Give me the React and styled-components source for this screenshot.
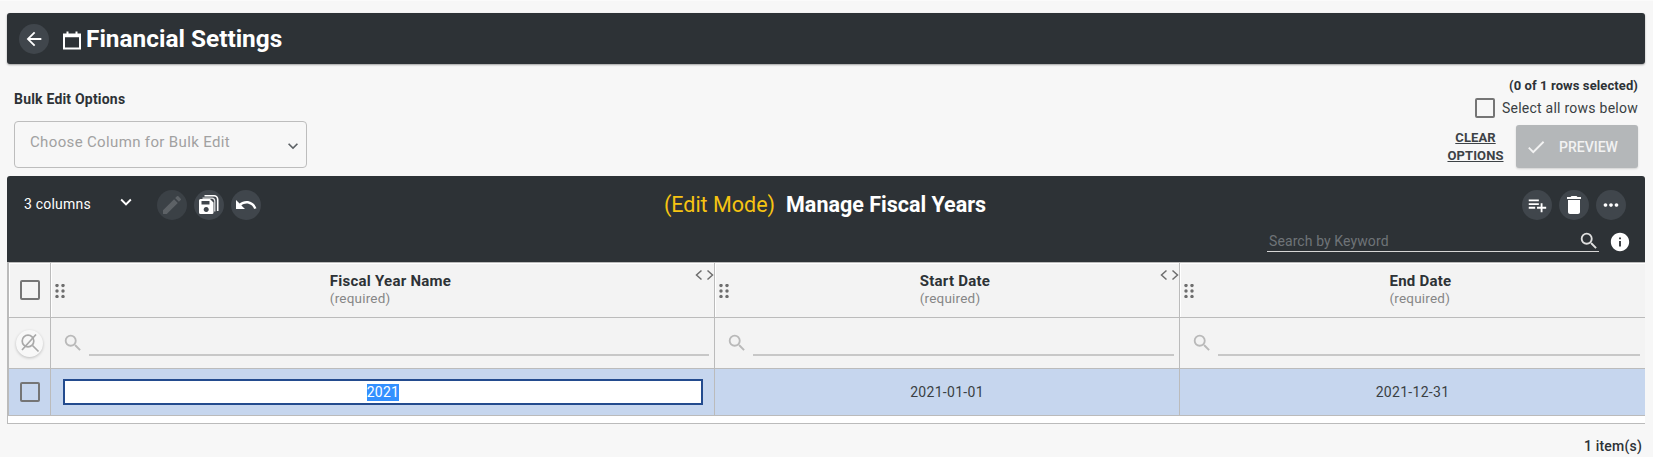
import React from "react";
import styled, { createGlobalStyle } from "styled-components";
import { MdArrowBack, MdEdit, MdUndo, MdPlaylistAdd, MdDelete, MdMoreHoriz, MdSearch, MdInfo, MdCheck, MdExpandMore } from "react-icons/md";

const Global = createGlobalStyle`
  html, body { margin: 0; padding: 0; background: #f7f7f7; }
  body { font-family: Roboto, "Liberation Sans", sans-serif; color: #2d3236; }
  * { box-sizing: border-box; }
`;

const Page = styled.div`
  width: 1653px; height: 457px; overflow: hidden; padding: 13px 8px 0 7px;
  border-top: 1px solid #fbfbfb;
  display: flex; flex-direction: column;
`;
const TitleBar = styled.header`
  height: 51px; margin-top: -1px; background: #2d3236; border-radius: 3px;
  box-shadow: 0 1px 2px rgba(0,0,0,.35);
  display: flex; align-items: center; padding-left: 12px; color: #fff;
`;
const Round = styled.button`
  width: 30px; height: 30px; border-radius: 50%; border: 0; padding: 0;
  background: #40464c; color: ${p => p.$dim ? "#6d7277" : "#fff"};
  opacity: ${p => p.$dim ? 0.75 : 1};
  display: flex; align-items: center; justify-content: center; flex: none;
`;
const Title = styled.h1`
  margin: 0 0 0 4px; font-size: 24.4px; font-weight: 700; line-height: 30px; color: #fff; letter-spacing: 0;
`;
const TitleIcon = styled.svg`margin: 3px 0 0 13px; flex: none;`;

const Options = styled.section`
  height: 112px; padding: 0 7px 8px 7px; display: flex; justify-content: space-between;
`;
const BulkCol = styled.div`display: flex; flex-direction: column; padding-top: 27px;`;
const BulkLabel = styled.label`font-size: 14px; font-weight: 700; line-height: 16px; color: #2d3236; letter-spacing: .2px;`;
const Select = styled.div`
  width: 293px; height: 47px; margin-top: 14px; border: 1px solid #bdbdbd; border-radius: 4px;
  padding: 0 3px 0 15px; display: flex; justify-content: space-between; align-items: center;
  font-size: 15px; color: #a1a1a1; letter-spacing: .35px;
  background: #f7f7f7;
`;
const SelectText = styled.span`margin-top: -5px;`;
const SelectArrow = styled.span`display: flex; margin-top: 3px; color: #5d6266;`;
const RightCol = styled.div`
  display: flex; flex-direction: column; align-items: flex-end; padding: 14px 0 0;
`;
const Count = styled.div`font-size: 13px; font-weight: 700; line-height: 16px; color: #2d3236; letter-spacing: .1px;`;
const SelectAll = styled.div`
  display: flex; align-items: center; gap: 7px; font-size: 14px; line-height: 20px; margin-top: 4px;
  color: #3a3f43; letter-spacing: .25px;
`;
const Box = styled.span`
  display: block; width: 20px; height: 20px; border: 2px solid #757575; border-radius: 2px; flex: none;
`;
const ActionRow = styled.div`display: flex; align-items: center; gap: 12px; margin-top: 7px;`;
const Clear = styled.a`
  width: 57px; text-align: center; font-size: 13px; font-weight: 700; line-height: 18px;
  color: #3d4246; text-decoration: underline; letter-spacing: .1px;
`;
const Preview = styled.button`
  width: 122px; height: 43px; border: 0; border-radius: 3px; background: #b4b7b9; color: #f2f2f2;
  box-shadow: 0 1px 2px rgba(0,0,0,.15);
  font: 500 14px Roboto, sans-serif; display: flex; align-items: center; padding: 0 0 0 9px; gap: 12px;
`;

const Toolbar = styled.div`
  height: 86px; background: #2d3236; border-radius: 3px 3px 0 0; color: #fff;
  display: grid; grid-template-columns: 1fr auto 1fr; grid-template-rows: 56px 30px;
  padding: 0 19px 0 17px;
`;
const ToolLeft = styled.div`display: flex; align-items: center; padding-top: 1px;`;
const Columns = styled.span`font-size: 14px; width: 92px; letter-spacing: .2px; margin-top: -1px;`;
const ColChevron = styled.span`display: flex; width: 42px; margin-top: -5px; margin-left: -1px;`;
const Buttons = styled.div`display: flex; gap: 7px;`;
const ToolTitle = styled.div`
  display: flex; align-items: center; gap: 11px; font-size: 21.5px; line-height: 24px; padding-top: 1px;
`;
const EditMode = styled.span`color: #f6c412;`;
const Manage = styled.span`font-weight: 700; color: #fff;`;
const ToolRight = styled.div`display: flex; justify-content: flex-end; align-items: center; padding-top: 1px;`;
const SearchRow = styled.div`
  grid-column: 1 / -1; display: flex; justify-content: flex-end; align-items: flex-start; gap: 10px; margin-right: -5px;
`;
const SearchBox = styled.div`
  width: 332px; height: 21px; margin-top: -1px; border-bottom: 1px solid #d6d6d6; display: flex; align-items: center; justify-content: space-between;
  font-size: 14px; color: #6f7478; padding-left: 2px; letter-spacing: .1px;
`;
const SearchGlyph = styled.span`display: flex; color: #dfdfdf; margin-right: -1px;`;
const InfoGlyph = styled.span`display: flex; margin-top: -1px; color: #fff;`;

const Grid = styled.div`
  display: grid; grid-template-columns: 42px 664px 465px 1fr; grid-template-rows: 55px 51px 47px;
  border-left: 2px solid #bbb; border-top: 1px solid #bbb; background: #f3f3f3;
`;
const Cell = styled.div`
  position: relative; border-right: 1px solid #bbb; border-bottom: 1px solid #bbb;
  display: flex; align-items: center; justify-content: center;
  background: ${p => p.$sel ? "#c6d6ee" : "#f3f3f3"};
  box-shadow: ${p => p.$head ? "inset 1px 1px 0 #fff" : "none"};
  &:nth-child(4n) { border-right: 0; }
`;
const HeadLabel = styled.div`
  padding-left: 16px; display: flex; flex-direction: column; align-items: flex-start; margin-top: -1px;
`;
const HeadName = styled.span`font-size: 15px; font-weight: 700; line-height: 18px; color: #2d3236; letter-spacing: .25px;`;
const HeadReq = styled.span`font-size: 13.5px; line-height: 17px; color: #868686; letter-spacing: .2px;`;
const Drag = styled.svg`position: absolute; left: 4px; top: 21px;`;
const Resize = styled.svg`position: absolute; right: 0; top: 6px;`;
const FilterCell = styled(Cell)`
  justify-content: flex-start; padding: 14px 5px 0 11px; gap: 5px;
`;
const FilterIcon = styled.span`display: flex; color: #b9b9b9; margin-top: -15px;`;
const FilterLine = styled.div`flex: 1; height: 2px; background: #c7c7c7; margin-top: 9px;`;
const FilterOff = styled.span`
  width: 27px; height: 27px; border-radius: 50%; background: #f8f8f8; box-shadow: 0 1px 3px rgba(0,0,0,.22);
  display: flex; align-items: center; justify-content: center;
`;
const CellInput = styled.div`
  width: 640px; height: 26px; margin-left: 1px; background: #fff; border: 2px solid #234b8e; display: flex; align-items: center; justify-content: center;
  font-size: 14px; color: #fff;
`;
const Selected = styled.span`background: #3390ff; line-height: 17px; letter-spacing: .25px;`;
const CellText = styled.span`font-size: 14px; color: #3a3f43; letter-spacing: .3px;`;
const Spacer = styled.div`
  height: 8px; background: #fff; border-left: 1px solid #bbb; border-bottom: 1px solid #bbb;
`;
const Footer = styled.div`
  text-align: right; font-size: 14px; font-weight: 500; color: #2d3236; padding: 14px 3px 0 0; letter-spacing: .2px;
`;

const DragIcon = () => (
  <Drag width="10" height="14" viewBox="0 0 10 14" fill="#6e6e6e">
    {[1.5, 7, 12.5].map(y => [2, 8].map(x => <circle key={`${x}${y}`} cx={x} cy={y} r="1.7" />))}
  </Drag>
);
const ResizeIcon = () => (
  <Resize width="19" height="12" viewBox="0 0 19 12" fill="none" stroke="#6e6e6e" strokeWidth="1.5">
    <path d="M6.5 1.5 1.5 6l5 4.5M12.5 1.5l5 4.5-5 4.5" />
  </Resize>
);
const SaveAll = () => (
  <svg width="20" height="19" viewBox="0 0 20 19" fill="#fff">
    <path d="M5.500 0H15a4.500 4.500 0 0 1 4.500 4.500V16h-1.600V4.500A3 3 0 0 0 15 1.600H5.500z" />
    <path d="M3.500 2.600h9.500a3.500 3.500 0 0 1 3.400 3.400V16.500h-1.200V6a2.500 2.500 0 0 0-2.200-2.200H3.500z" opacity=".85" />
    <path fillRule="evenodd" d="M0 5.500A1.500 1.500 0 0 1 1.500 4H11l3.500 3.500V17.500A1.500 1.500 0 0 1 13 19H1.500A1.500 1.500 0 0 1 0 17.500zM2.500 6v3.500h8V6zM7.200 12a2.500 2.500 0 1 0 .01 0z" />
  </svg>
);
const NoFilter = () => (
  <svg width="22" height="22" viewBox="0 0 22 22" fill="none" stroke="#a9a9a9" strokeWidth="1.7">
    <circle cx="9" cy="9" r="5.8" />
    <path d="m13.500 13.500 6 6M3 18 17 2.500" />
  </svg>
);
const Head = ({ name, resize }) => (
  <Cell $head>
    <DragIcon />
    <HeadLabel>
      <HeadName>{name}</HeadName>
      <HeadReq>(required)</HeadReq>
    </HeadLabel>
    {resize && <ResizeIcon />}
  </Cell>
);
const Filter = () => (
  <FilterCell>
    <FilterIcon><MdSearch size={22} /></FilterIcon>
    <FilterLine />
  </FilterCell>
);

export default function App() {
  return (
    <Page>
      <Global />
      <TitleBar>
        <Round><MdArrowBack size={22} /></Round>
        <TitleIcon width="20" height="20" viewBox="0 0 20 20" fill="none" stroke="#fff">
          <path d="M2 4.500h16V18.500H2z" strokeWidth="2" />
          <path d="M2 6h16" strokeWidth="2.500" />
          <path d="M5.500 1.500v3M14.500 1.500v3" strokeWidth="2" />
        </TitleIcon>
        <Title>Financial Settings</Title>
      </TitleBar>
      <Options>
        <BulkCol>
          <BulkLabel>Bulk Edit Options</BulkLabel>
          <Select>
            <SelectText>Choose Column for Bulk Edit</SelectText>
            <SelectArrow><MdExpandMore size={20} /></SelectArrow>
          </Select>
        </BulkCol>
        <RightCol>
          <Count>(0 of 1 rows selected)</Count>
          <SelectAll><Box />Select all rows below</SelectAll>
          <ActionRow>
            <Clear>CLEAR OPTIONS</Clear>
            <Preview><MdCheck size={22} /><span>PREVIEW</span></Preview>
          </ActionRow>
        </RightCol>
      </Options>
      <Toolbar>
        <ToolLeft>
          <Columns>3 columns</Columns>
          <ColChevron><MdExpandMore size={22} /></ColChevron>
          <Buttons>
            <Round $dim><MdEdit size={24} /></Round>
            <Round><SaveAll /></Round>
            <Round><MdUndo size={24} /></Round>
          </Buttons>
        </ToolLeft>
        <ToolTitle>
          <EditMode>(Edit Mode)</EditMode>
          <Manage>Manage Fiscal Years</Manage>
        </ToolTitle>
        <ToolRight>
          <Buttons>
            <Round><MdPlaylistAdd size={22} /></Round>
            <Round><MdDelete size={24} /></Round>
            <Round><MdMoreHoriz size={22} /></Round>
          </Buttons>
        </ToolRight>
        <SearchRow>
          <SearchBox>
            Search by Keyword
            <SearchGlyph><MdSearch size={22} /></SearchGlyph>
          </SearchBox>
          <InfoGlyph><MdInfo size={22} /></InfoGlyph>
        </SearchRow>
      </Toolbar>
      <Grid>
        <Cell $head><Box /></Cell>
        <Head name="Fiscal Year Name" resize />
        <Head name="Start Date" resize />
        <Head name="End Date" />
        <Cell><FilterOff><NoFilter /></FilterOff></Cell>
        <Filter />
        <Filter />
        <Filter />
        <Cell $sel><Box /></Cell>
        <Cell $sel><CellInput><Selected>2021</Selected></CellInput></Cell>
        <Cell $sel><CellText>2021-01-01</CellText></Cell>
        <Cell $sel><CellText>2021-12-31</CellText></Cell>
      </Grid>
      <Spacer />
      <Footer>1 item(s)</Footer>
    </Page>
  );
}
